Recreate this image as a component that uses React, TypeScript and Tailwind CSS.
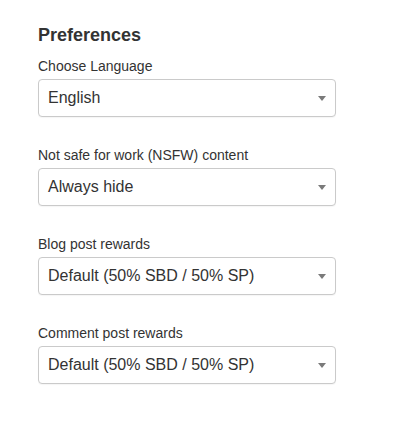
import React from 'react'

const fields = [
  { label: 'Choose Language', value: 'English' },
  { label: 'Not safe for work (NSFW) content', value: 'Always hide' },
  { label: 'Blog post rewards', value: 'Default (50% SBD / 50% SP)' },
  { label: 'Comment post rewards', value: 'Default (50% SBD / 50% SP)' },
]

const SelectBox = ({ value }: { value: string }) => (
  <div className="flex h-[38px] w-[298px] items-center justify-between rounded-[4px] border border-[#cacaca] bg-white pl-[9px] pr-[9px] shadow-[0_1px_1px_rgba(0,0,0,0.04)]">
    <span className="text-[16px] leading-[20px] text-[#333]">{value}</span>
    <svg width="8" height="5" viewBox="0 0 8 5" className="block">
      <polygon points="0,0 8,0 4,5" fill="#7a7a7a" />
    </svg>
  </div>
)

export default function App() {
  return (
    <div
      className="min-h-[436px] w-[410px] bg-white px-[38px] pt-[23px] text-[#333]"
      style={{ fontFamily: '"Liberation Sans", Arial, sans-serif' }}
    >
      <h2 className="mb-[9px] text-[18px] font-bold leading-[24px]">Preferences</h2>
      {fields.map((f, i) => (
        <div key={i} className="mb-[28px]">
          <div className="mb-[3px] text-[14px] leading-[20px]">{f.label}</div>
          <SelectBox value={f.value} />
        </div>
      ))}
    </div>
  )
}
